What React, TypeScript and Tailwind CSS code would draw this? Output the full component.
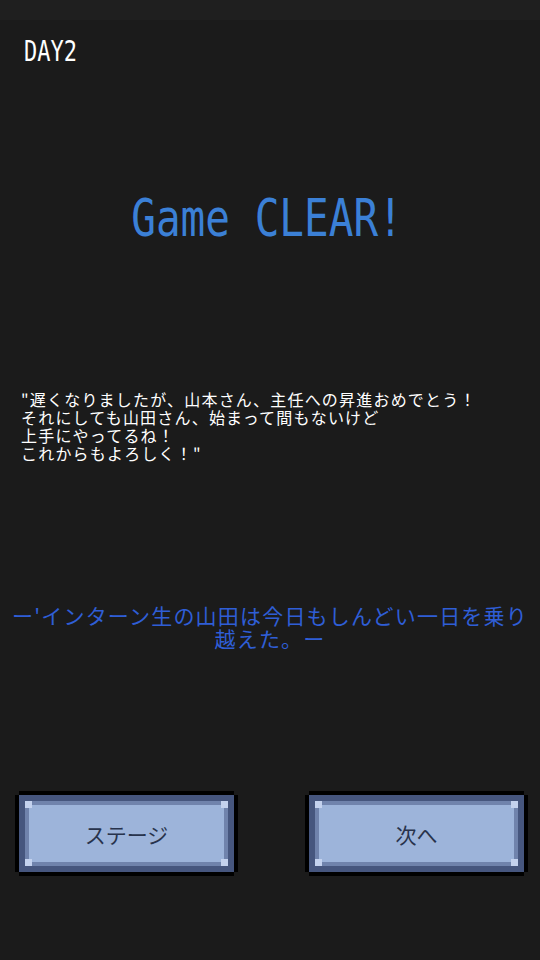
import React from "react";

const mono = { fontFamily: '"DejaVu Sans Mono", "Liberation Mono", monospace' };
const jp = { fontFamily: '"Noto Sans CJK JP", "Noto Sans", sans-serif' };

function PixelButton({ label }: { label: string }) {
  return (
    <button
      className="w-[223px] h-[85px] bg-black p-[4px] [clip-path:polygon(4px_0,calc(100%-4px)_0,calc(100%-4px)_4px,100%_4px,100%_calc(100%-4px),calc(100%-4px)_calc(100%-4px),calc(100%-4px)_100%,4px_100%,4px_calc(100%-4px),0_calc(100%-4px),0_4px,4px_4px)]"
    >
      <div className="w-full h-full bg-[#46567e] p-[6px]">
        <div className="relative w-full h-full bg-[#9db4da] border-[4px] border-[#7083ac] flex items-center justify-center">
          <span className="absolute -left-[4px] -top-[4px] w-[7px] h-[7px] bg-[#c4d2ee]" />
          <span className="absolute -right-[4px] -top-[4px] w-[7px] h-[7px] bg-[#c4d2ee]" />
          <span className="absolute -left-[4px] -bottom-[4px] w-[7px] h-[7px] bg-[#c4d2ee]" />
          <span className="absolute -right-[4px] -bottom-[4px] w-[7px] h-[7px] bg-[#c4d2ee]" />
          <span className="text-[21px] leading-[24px] text-[#28334c]" style={jp}>
            {label}
          </span>
        </div>
      </div>
    </button>
  );
}

export default function App() {
  return (
    <div className="w-[540px] h-[960px] bg-[#1b1b1b] flex flex-col overflow-hidden">
      <div className="h-[20px] bg-[#1f1f1f]" />

      <div className="mt-[21px] pl-[24px]">
        <span className="inline-block text-[22px] leading-[22px] text-white scale-y-125" style={mono}>
          DAY2
        </span>
      </div>

      <div className="mt-[133px] flex justify-center">
        <span className="inline-block text-[41px] leading-[40px] text-[#3b80d6] scale-y-125 pr-[6px]" style={mono}>
          Game CLEAR!
        </span>
      </div>

      <div className="mt-[152px] pl-[21px] text-[16px] leading-[18px] tracking-[1.2px] text-white" style={jp}>
        <p>"遅くなりましたが、山本さん、主任への昇進おめでとう！</p>
        <p>それにしても山田さん、始まって間もないけど</p>
        <p>上手にやってるね！</p>
        <p>これからもよろしく！"</p>
      </div>

      <div className="mt-[142px] text-center text-[21px] leading-[23px] tracking-[1.2px] text-[#2f5ed6]" style={jp}>
        ー'インターン生の山田は今日もしんどい一日を乗り
        <br />
        越えた。ー
      </div>

      <div className="mt-[141px] flex justify-between pl-[15px] pr-[12px]">
        <PixelButton label="ステージ" />
        <PixelButton label="次へ" />
      </div>
    </div>
  );
}
